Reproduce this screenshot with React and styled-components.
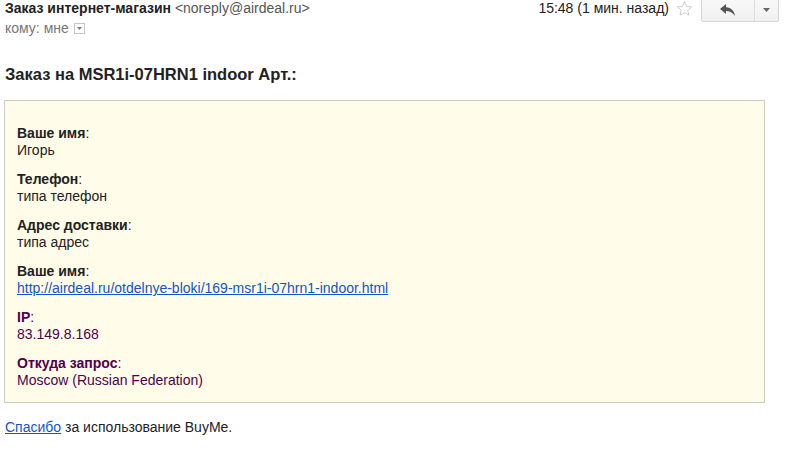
import React from "react";
import styled, { createGlobalStyle } from "styled-components";

const Global = createGlobalStyle`
  html, body { margin: 0; padding: 0; background: #fff; }
  body { font-family: "Liberation Sans", Arial, sans-serif; font-size: 14px; color: #222; overflow: hidden; }
`;

const Page = styled.div`
  width: 790px;
  height: 452px;
  padding: 0 0 0 5px;
  box-sizing: border-box;
`;

const TopBar = styled.div`
  display: flex;
  justify-content: space-between;
  align-items: flex-start;
  height: 20px;
`;

const Sender = styled.div`
  line-height: 16px;
  white-space: nowrap;
`;

const SenderName = styled.span`
  font-weight: bold;
  color: #222;
`;

const SenderMail = styled.span`
  color: #555;
`;

const Right = styled.div`
  display: flex;
  align-items: flex-start;
`;

const Time = styled.span`
  line-height: 16px;
  color: #222;
  margin-right: 7px;
`;

const Star = styled.span`
  margin-top: 0px;
  margin-right: 8px;
  display: flex;
`;

const BtnGroup = styled.div`
  display: flex;
  margin-top: -3px;
  margin-right: 11px;
  border: 1px solid #d5d5d5;
  border-radius: 2px;
  background: linear-gradient(#f8f8f8, #f1f1f1);
  height: 25px;
  box-sizing: border-box;
`;

const Btn = styled.div`
  width: ${p => p.$w}px;
  display: flex;
  align-items: center;
  justify-content: center;
  border-left: ${p => (p.$divider ? "1px solid #dcdcdc" : "none")};
`;

const ToRow = styled.div`
  display: flex;
  align-items: center;
  color: #777;
  line-height: 16px;
`;

const Drop = styled.span`
  display: inline-flex;
  align-items: center;
  justify-content: center;
  width: 11px;
  height: 11px;
  border: 1px solid #c6c6c6;
  margin-left: 5px;
  box-sizing: border-box;
  margin-top: 1px;
`;

const Title = styled.h1`
  margin: 29px 0 0 0;
  font-size: 16.5px;
  line-height: 18px;
  font-weight: bold;
  color: #222;
`;

const Box = styled.div`
  margin: 17px 0 0 -1px;
  width: 761px;
  height: 303px;
  box-sizing: border-box;
  background: #fffce9;
  border: 1px solid #cfcbc0;
  padding: 24px 12px 0 12px;
`;

const Field = styled.div`
  line-height: 17px;
  margin-bottom: 12px;
  color: ${p => (p.$purple ? "#500050" : "#222")};
`;

const Label = styled.b`
  font-weight: bold;
`;

const Link = styled.a`
  color: #1155cc;
  text-decoration: underline;
`;

const Footer = styled.div`
  margin-top: 16px;
  line-height: 16px;
  color: #222;
`;

const fields = [
  { label: "Ваше имя", value: "Игорь" },
  { label: "Телефон", value: "типа телефон" },
  { label: "Адрес доставки", value: "типа адрес" },
  { label: "Ваше имя", value: "http://airdeal.ru/otdelnye-bloki/169-msr1i-07hrn1-indoor.html", link: true },
  { label: "IP", value: "83.149.8.168", purple: true },
  { label: "Откуда запрос", value: "Moscow (Russian Federation)", purple: true },
];

export default function App() {
  return (
    <Page>
      <Global />
      <TopBar>
        <Sender>
          <SenderName>Заказ интернет-магазин</SenderName>{" "}
          <SenderMail>&lt;noreply@airdeal.ru&gt;</SenderMail>
        </Sender>
        <Right>
          <Time>15:48 (1 мин. назад)</Time>
          <Star>
            <svg width="17" height="17" viewBox="0 0 24 24">
              <path d="M12 2.5l2.9 6.6 7.1.6-5.4 4.7 1.6 7-6.2-3.7-6.2 3.7 1.6-7L2 9.7l7.1-.6z" fill="none" stroke="#c8c8c8" strokeWidth="1.3" strokeLinejoin="round" />
            </svg>
          </Star>
          <BtnGroup>
            <Btn $w={52}>
              <svg width="16" height="12" viewBox="0 0 16 12">
                <path d="M6 0 L0 5 L6 10 V7 C10 7 12.5 8.5 15 12 C14 6.5 11 3.8 6 3.3 Z" fill="#555" />
              </svg>
            </Btn>
            <Btn $w={23} $divider>
              <svg width="7" height="4" viewBox="0 0 7 4"><path d="M0 0h7L3.5 4z" fill="#666" /></svg>
            </Btn>
          </BtnGroup>
        </Right>
      </TopBar>
      <ToRow>
        кому: мне
        <Drop>
          <svg width="5" height="3" viewBox="0 0 5 3"><path d="M0 0h5L2.5 3z" fill="#777" /></svg>
        </Drop>
      </ToRow>
      <Title>Заказ на MSR1i-07HRN1 indoor Арт.:</Title>
      <Box>
        {fields.map((f, i) => (
          <Field key={i} $purple={f.purple}>
            <Label>{f.label}</Label>:
            <br />
            {f.link ? <Link href="#">{f.value}</Link> : f.value}
          </Field>
        ))}
      </Box>
      <Footer>
        <Link href="#">Спасибо</Link> за использование BuyMe.
      </Footer>
    </Page>
  );
}
